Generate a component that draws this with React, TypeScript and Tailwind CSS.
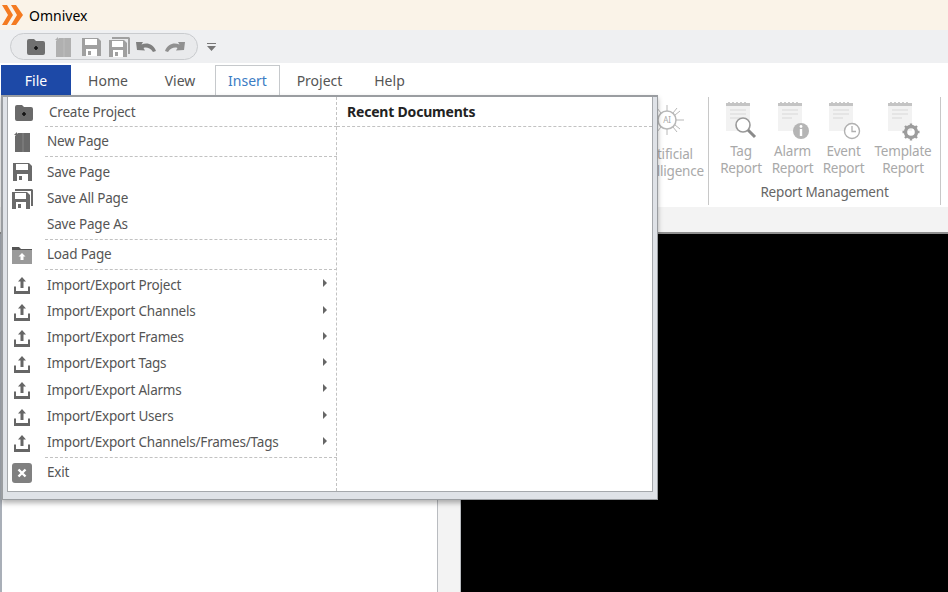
import React from 'react'

const FolderPlus = () => (
  <svg width="20" height="18" viewBox="0 0 20 18">
    <path d="M1 3q0-2 2-2h5l2 2h7q2 0 2 2v10q0 2-2 2H3q-2 0-2-2z" fill="currentColor" />
    <path d="M8 10h4M10 8v4" stroke="#111" strokeWidth="1.6" />
  </svg>
)

const PageIcon = () => (
  <svg width="18" height="20" viewBox="0 0 18 20">
    <path d="M5 1h12v19H2V4z" fill="currentColor" />
    <path d="M10 1v19" stroke="#fff" strokeOpacity="0.2" />
    <path d="M1 3l3-3v3z" fill="currentColor" />
  </svg>
)

const SaveIcon = () => (
  <svg width="19" height="18" viewBox="0 0 19 18">
    <path d="M0 0h16l3 3v15H0z" fill="currentColor" />
    <rect x="3" y="1" width="12" height="6" fill="#fff" />
    <rect x="4" y="11" width="11" height="7" fill="#fff" />
    <rect x="6" y="13" width="3" height="4" fill="currentColor" />
  </svg>
)

const SaveAllIcon = () => (
  <svg width="21" height="20" viewBox="0 0 21 20">
    <path d="M3 0h17l1 1v16h-2V2H3z" fill="currentColor" />
    <path d="M0 3h15l3 3v14H0z" fill="currentColor" />
    <rect x="3" y="4" width="11" height="6" fill="#fff" />
    <rect x="4" y="13" width="10" height="7" fill="#fff" />
    <rect x="6" y="15" width="3" height="4" fill="currentColor" />
  </svg>
)

const LoadIcon = () => (
  <svg width="20" height="17" viewBox="0 0 20 17">
    <path d="M0 0h7l2 2h11v1H0z" fill="#555" />
    <path d="M0 3h20v14H0z" fill="#9a9a9a" />
    <path d="M10 6l3.5 3.5H11.500V13h-3V9.500H6.500z" fill="#fff" />
  </svg>
)

const UploadIcon = () => (
  <svg width="18" height="18" viewBox="0 0 18 18">
    <path d="M9 1l4 4.500h-2.500V12h-3V5.500H5z" fill="#666" />
    <path d="M1 10.500h2V15h12v-4.500h2V18H1z" fill="#666" />
  </svg>
)

const ExitIcon = () => (
  <svg width="20" height="20" viewBox="0 0 20 20">
    <rect width="20" height="20" rx="3" fill="#808080" />
    <path d="M6.500 6.500l7 7M13.500 6.500l-7 7" stroke="#fff" strokeWidth="2.400" />
  </svg>
)

const UndoIcon = ({ flip }: { flip?: boolean }) => (
  <svg width="21" height="12" viewBox="0 0 21 12" className={flip ? '-scale-x-100' : ''}>
    <path d="M0 1l7 0-1.500 2.500C11 1.500 17 2.500 20 10l-3 1C14 6.500 10 6 7.500 7L9 9.500 1 9z" fill="currentColor" />
  </svg>
)

const ReportIcon = ({ kind }: { kind: 'search' | 'info' | 'clock' | 'gear' }) => (
  <svg width="36" height="44" viewBox="0 0 36 44">
    <rect x="3" y="3" width="24" height="28" fill="#f2f2f2" />
    <rect x="3" y="3" width="24" height="3" fill="#c4c4c4" />
    <path d="M6 3v-1M10 3v-1M14 3v-1M18 3v-1M22 3v-1" stroke="#999" />
    <path d="M7 10h16M7 14h16M7 18h10" stroke="#d8d8d8" />
    {kind === 'search' && (
      <g fill="#fff" stroke="#999">
        <circle cx="20" cy="25" r="7" strokeWidth="1.600" />
        <path d="M25 30l7 7" stroke="#8a8a8a" strokeWidth="3" />
      </g>
    )}
    {kind === 'info' && (
      <g>
        <circle cx="26" cy="31" r="8" fill="#b5b5b5" />
        <path d="M26 29v7" stroke="#fff" strokeWidth="2.400" />
        <circle cx="26" cy="26.500" r="1.400" fill="#fff" />
      </g>
    )}
    {kind === 'clock' && (
      <g fill="#fff" stroke="#b0b0b0">
        <circle cx="26" cy="31" r="7.500" strokeWidth="1.400" />
        <path d="M26 26v5.500h4" fill="none" strokeWidth="1.300" />
      </g>
    )}
    {kind === 'gear' && (
      <g>
        <circle cx="26" cy="32" r="5.500" fill="none" stroke="#9c9c9c" strokeWidth="3.400" />
        <path d="M26 23.500v3M26 37.500v3M17.500 32h3M31.500 32h3M20 26l2 2M30 36l2 2M32 26l-2 2M22 36l-2 2" stroke="#9c9c9c" strokeWidth="2.400" />
      </g>
    )}
  </svg>
)

const AiIcon = () => (
  <svg width="36" height="36" viewBox="0 0 36 36" fill="none" stroke="#b8b8b8">
    <circle cx="17" cy="18" r="9" strokeWidth="1.500" />
    <path d="M17 9V3M11 11L7 6M23 11l4-5M26 18h8M25 23l5 4M25 13l5-4M17 27v6M11 25l-4 5M23 25l4 5M8 18H1" />
    <text x="17" y="21" fontSize="8" textAnchor="middle" fill="#aaa" stroke="none">AI</text>
  </svg>
)

const reports: { top: string; bottom: string; kind: 'search' | 'info' | 'clock' | 'gear'; width: string }[] = [
  { top: 'Tag', bottom: 'Report', kind: 'search', width: 'w-[52px]' },
  { top: 'Alarm', bottom: 'Report', kind: 'info', width: 'w-[51px]' },
  { top: 'Event', bottom: 'Report', kind: 'clock', width: 'w-[51px]' },
  { top: 'Template', bottom: 'Report', kind: 'gear', width: 'w-[68px]' },
]

const imports = ['Project', 'Channels', 'Frames', 'Tags', 'Alarms', 'Users', 'Channels/Frames/Tags']

const MenuItem = ({ icon, label, arrow }: { icon?: React.ReactNode; label: string; arrow?: boolean }) => (
  <div className="flex h-[26.250px] items-center">
    <div className="flex w-[26px] justify-center text-[#6a6a6a]">{icon}</div>
    <span className="ml-[12px] flex-1 leading-none">{label}</span>
    {arrow && <span className="mr-[9px] h-0 w-0 -translate-y-[2px] border-y-[4px] border-l-[4px] border-y-transparent border-l-[#666]" />}
  </div>
)

export default function App() {
  return (
    <div className="relative flex h-[592px] w-[948px] flex-col overflow-hidden bg-white font-['Noto_Sans',sans-serif] text-[13.5px] tracking-[-0.2px] text-[#555]">
      {/* title bar */}
      <div className="flex h-[30px] items-center gap-[6px] bg-[#faf3e8] pl-[2px]">
        <svg width="21" height="20" viewBox="0 0 21 20" fill="#f47a20">
          <path d="M0 0h5l6 10-6 10H0l6-10z" />
          <path d="M9 0h5l7 10-7 10H9l6-10z" />
        </svg>
        <span className="text-[14px] tracking-normal text-black">Omnivex</span>
      </div>

      {/* quick access */}
      <div className="flex h-[33px] items-center bg-[#eff0f2] pl-[10px]">
        <div className="flex h-[27px] w-[188px] items-center rounded-full border border-[#c9cbce] bg-[#e9eaec] pl-[15px] text-[#8c8c8c]">
          <div className="flex w-[28px] justify-start text-[#707070]"><FolderPlus /></div>
          <div className="flex w-[28px] justify-start text-[#b0b0b0]"><PageIcon /></div>
          <div className="flex w-[27px] justify-start text-[#a0a0a0]"><SaveIcon /></div>
          <div className="flex w-[27px] justify-start text-[#a0a0a0]"><SaveAllIcon /></div>
          <div className="flex w-[28px] justify-start text-[#808080]"><UndoIcon /></div>
          <div className="flex w-[24px] justify-start text-[#909090]"><UndoIcon flip /></div>
        </div>
        <svg className="ml-[9px]" width="9" height="8" viewBox="0 0 9 8" fill="#777">
          <path d="M0 0h9v1H0zM0 3h9L4.500 8z" />
        </svg>
      </div>

      {/* tabs */}
      <div className="flex h-[32px] items-end pl-[1px] text-[14px] tracking-normal">
        <div className="flex h-[30px] w-[70px] items-center justify-center bg-[#1d49a7] text-white">File</div>
        <div className="flex h-[30px] w-[74px] items-center justify-center">Home</div>
        <div className="flex h-[30px] w-[70px] items-center justify-center">View</div>
        <div className="flex h-[30px] w-[65px] items-center justify-center border border-b-0 border-[#c6c9cc] text-[#3b7cc4]">Insert</div>
        <div className="flex h-[30px] w-[79px] items-center justify-center">Project</div>
        <div className="flex h-[30px] w-[61px] items-center justify-center">Help</div>
      </div>

      {/* ribbon, mostly hidden by the file menu */}
      <div className="flex h-[112px] bg-white text-[#a9a9a9]">
        <div className="w-[628px]" />
        <div className="flex w-[80px] flex-col items-center pt-[7px] leading-[17px]">
          <AiIcon />
          <span className="mt-[8px]">Artificial</span>
          <span>Intelligence</span>
        </div>
        <div className="my-[2px] w-px bg-[#c8c8c8]" />
        <div className="flex w-[231px] flex-col">
          <div className="flex pl-[6px]">
            {reports.map((r) => (
              <div key={r.top} className={`flex flex-col items-center pt-[5px] leading-[17px] ${r.width}`}>
                <ReportIcon kind={r.kind} />
                <span className="-mt-[1px]">{r.top}</span>
                <span>{r.bottom}</span>
              </div>
            ))}
          </div>
          <div className="mt-[5px] text-center text-[#666]">Report Management</div>
        </div>
        <div className="my-[2px] w-px bg-[#c8c8c8]" />
      </div>

      {/* strip above the canvas */}
      <div className="h-[27px] border-b-2 border-[#8f8f8f] bg-[#f3f3f3]" />

      {/* work area */}
      <div className="flex flex-1">
        <div className="w-[437px] border-l-2 border-[#a9afb8] bg-white" />
        <div className="w-[24px] border-x border-x-[#b9bcc0] bg-[#f3f3f3]" />
        <div className="flex-1 bg-black" />
      </div>

      {/* file menu */}
      <div className="absolute left-[1px] top-[95px] flex h-[405px] w-[657px] border-2 border-b border-r border-[#9a9da1] bg-[#dfe2e7] pb-[7px] pl-[4px] pr-[4px] shadow-[0_3px_5px_rgba(0,0,0,0.3)]">
        <div className="flex flex-1 border border-[#a5a8ac] border-t-0 bg-white">
          <div className="flex w-[329px] flex-col border-r border-dashed border-[#c2c2c2] pl-[1px]">
            <div className="border-b border-dashed border-[#c2c2c2] ml-[36px] -mr-px h-[30px]" />
            <div className="absolute left-[8px] top-[3px] w-[320px]">
              <div className="h-[26px]"><MenuItem icon={<FolderPlus />} label="Create Project" /></div>
            </div>
            <Group rows={[{ icon: <PageIcon />, label: 'New Page' }]} />
            <Group rows={[{ icon: <SaveIcon />, label: 'Save Page' }, { icon: <SaveAllIcon />, label: 'Save All Page' }, { label: 'Save Page As' }]} />
            <Group rows={[{ icon: <LoadIcon />, label: 'Load Page' }]} />
            <Group rows={imports.map((n) => ({ icon: <UploadIcon />, label: `Import/Export ${n}`, arrow: true }))} />
            <div className="pt-[2px]"><MenuItem icon={<ExitIcon />} label="Exit" /></div>
          </div>
          <div className="flex-1">
            <div className="flex h-[30px] items-center border-b border-dashed border-[#c2c2c2] pl-[10px] text-[14px] font-bold tracking-[-0.2px] text-[#222]">
              Recent Documents
            </div>
          </div>
        </div>
      </div>
    </div>
  )
}

function Group({ rows }: { rows: { icon?: React.ReactNode; label: string; arrow?: boolean }[] }) {
  return (
    <div className="relative py-[2px]">
      {rows.map((r) => (
        <MenuItem key={r.label} icon={r.icon} label={r.label} arrow={r.arrow} />
      ))}
      <div className="absolute bottom-0 left-[36px] -right-px border-b border-dashed border-[#c2c2c2]" />
    </div>
  )
}
